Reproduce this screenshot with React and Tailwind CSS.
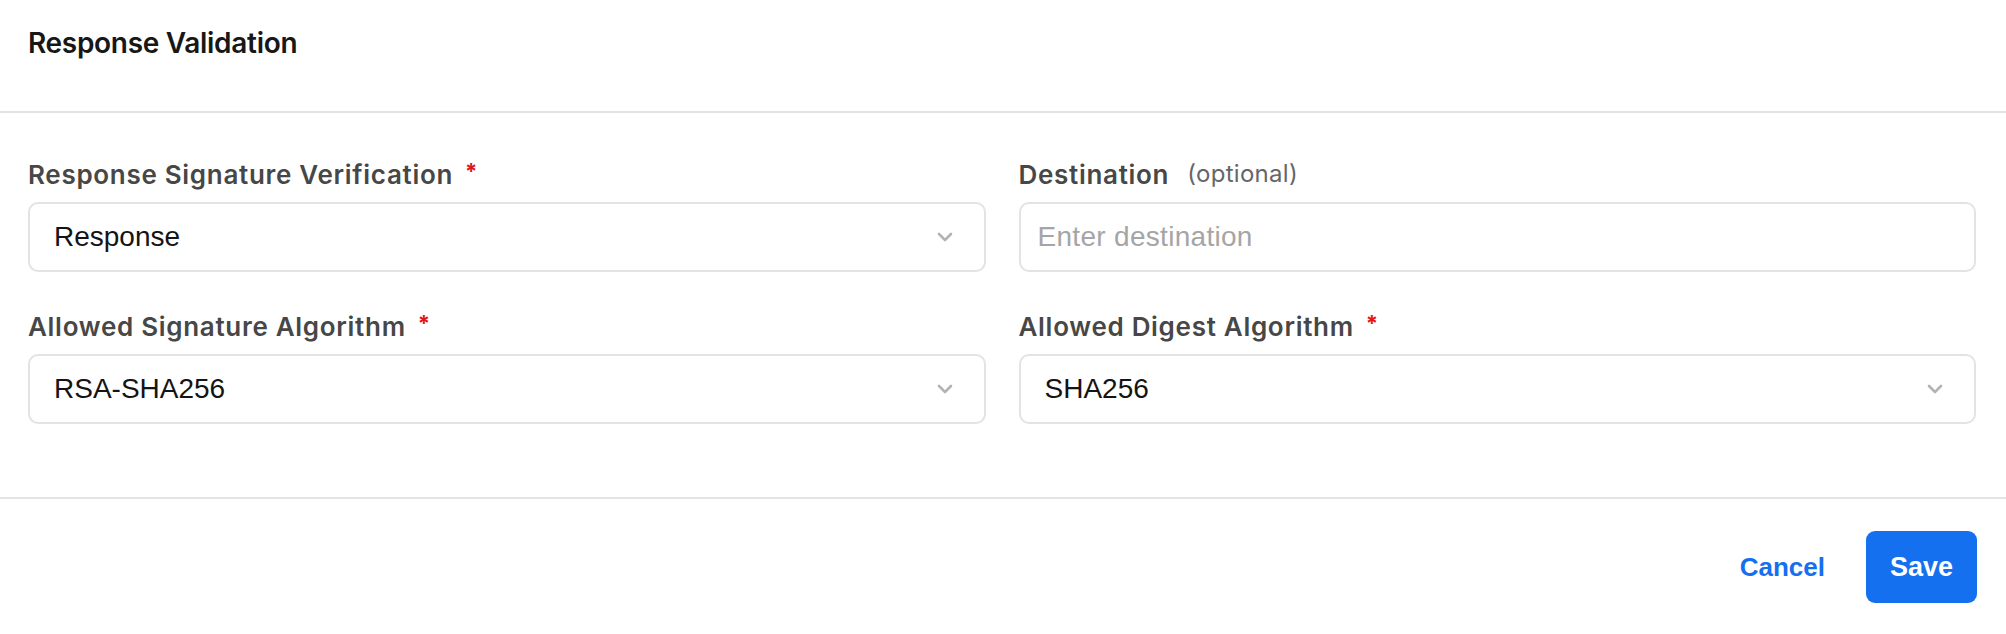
import React, { useState } from "react";

function Chevron() {
  return (
    <svg width="16" height="10" viewBox="0 0 16 10" fill="none" className="shrink-0">
      <path d="M2 2 L8 8 L14 2" stroke="#b3b3b3" strokeWidth="2.6" strokeLinecap="round" strokeLinejoin="round" />
    </svg>
  );
}

function Label({ text, required, optional }) {
  return (
    <div className="flex items-center h-[30px] font-['Inter',sans-serif] text-[26px] font-semibold text-[#474747] tracking-[0.7px]">
      <span>{text}</span>
      {required && <span className="ml-[12px] self-start text-[22px] leading-[24px] font-bold text-[#e0161c]">*</span>}
      {optional && <span className="ml-[18px] text-[24px] font-normal text-[#666666] tracking-[0.3px]">(optional)</span>}
    </div>
  );
}

function SelectBox({ value }) {
  return (
    <div className="flex h-[70px] items-center justify-between rounded-[10px] border-2 border-[#e3e3e3] bg-white pl-[24px] pr-[31px]">
      <span className="font-['Liberation_Sans',Arial,sans-serif] text-[28px] text-[#141414]">{value}</span>
      <Chevron />
    </div>
  );
}

export default function App() {
  const [destination, setDestination] = useState("");

  return (
    <div className="min-h-screen w-full bg-white">
      <div className="h-[113px] border-b-2 border-[#e3e3e3] pl-[28px] pt-[27px]">
        <h2 className="font-['Inter',sans-serif] text-[28px] leading-[32px] font-semibold text-[#171717] tracking-[-0.3px]">
          Response Validation
        </h2>
      </div>

      <div className="grid grid-cols-2 gap-x-[33px] gap-y-[39px] pl-[28px] pr-[30px] pt-[46px] pb-[73px]">
        <div className="flex flex-col gap-[13px]">
          <Label text="Response Signature Verification" required />
          <SelectBox value="Response" />
        </div>
        <div className="flex flex-col gap-[13px]">
          <Label text="Destination" optional />
          <input
            value={destination}
            onChange={(e) => setDestination(e.target.value)}
            placeholder="Enter destination"
            className="h-[70px] w-full rounded-[10px] border-2 border-[#e3e3e3] bg-white px-[17px] font-['Liberation_Sans',Arial,sans-serif] text-[28px] tracking-[0.3px] text-[#141414] placeholder:text-[#a5a5a5] outline-none"
          />
        </div>
        <div className="flex flex-col gap-[13px]">
          <Label text="Allowed Signature Algorithm" required />
          <SelectBox value="RSA-SHA256" />
        </div>
        <div className="flex flex-col gap-[13px]">
          <Label text="Allowed Digest Algorithm" required />
          <SelectBox value="SHA256" />
        </div>
      </div>

      <div className="flex items-center justify-end gap-[41px] border-t-2 border-[#e3e3e3] pr-[29px] pt-[32px] pb-[31px]">
        <button className="font-['Liberation_Sans',Arial,sans-serif] text-[26px] font-bold text-[#1570ef]">
          Cancel
        </button>
        <button className="h-[72px] w-[111px] rounded-[9px] bg-[#1570ef] font-['Liberation_Sans',Arial,sans-serif] text-[27px] font-bold text-white">
          Save
        </button>
      </div>
    </div>
  );
}
